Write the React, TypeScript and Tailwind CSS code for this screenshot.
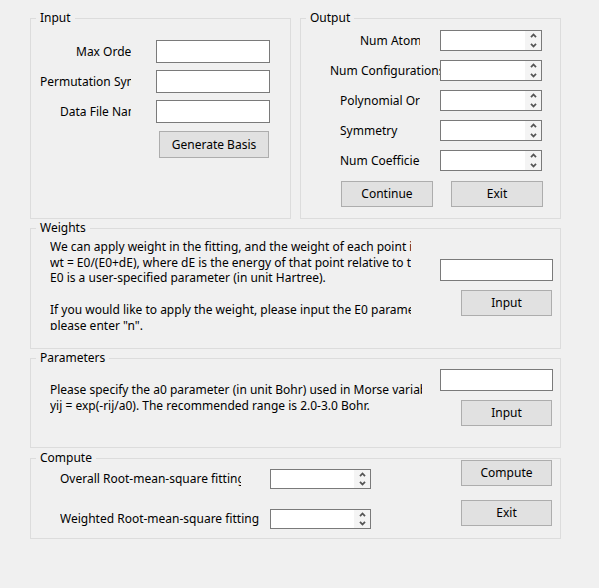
import React from "react";

function Legend({ children }: { children: React.ReactNode }) {
  return (
    <span className="absolute left-[5px] top-[-9px] bg-[#f0f0f0] px-[4px] leading-[16px] whitespace-nowrap">
      {children}
    </span>
  );
}

function Entry({ w, h }: { w: string; h: string }) {
  return <div className={`${w} ${h} border border-[#7a7a7a] bg-white`} />;
}

function Spin({ big }: { big?: boolean }) {
  return (
    <div
      className={
        big
          ? "flex h-[21px] w-[102px] shrink-0 border border-[#7a7a7a] bg-white"
          : "flex h-[20px] w-[101px] shrink-0 border border-[#7a7a7a] bg-white"
      }
    >
      <div className="flex-1" />
      <div className="flex w-[16px] flex-col items-center justify-between bg-[#f4f4f4] py-[2px]">
        <svg width="7" height="5" viewBox="0 0 7 5">
          <path d="M1 4.2 L3.5 1.5 L6 4.2" stroke="#555555" strokeWidth="1.8" fill="none" />
        </svg>
        <svg width="7" height="5" viewBox="0 0 7 5">
          <path d="M1 0.8 L3.5 3.5 L6 0.8" stroke="#555555" strokeWidth="1.8" fill="none" />
        </svg>
      </div>
    </div>
  );
}

function Btn({ children, cls }: { children: React.ReactNode; cls: string }) {
  return (
    <div
      className={`${cls} flex shrink-0 items-center justify-center border border-[#adadad] bg-[#e1e1e1]`}
    >
      {children}
    </div>
  );
}

export default function App() {
  return (
    <div className="h-[588px] w-[599px] bg-[#f0f0f0] pl-[30px] pt-[18px] font-['Noto_Sans',sans-serif] text-[12px] text-black">
      {/* top row */}
      <div className="flex gap-[9px]">
        {/* Input */}
        <div className="relative h-[201px] w-[261px] border border-[#dcdcdc]">
          <Legend>Input</Legend>
          <div className="flex flex-col gap-[7px] pl-[9px] pt-[21px]">
            {[
              ["Max Order", "pl-[36px]"],
              ["Permutation Symmetry", "pl-[0px]"],
              ["Data File Name", "pl-[20px]"],
            ].map(([t, p]) => (
              <div key={t} className="flex h-[23px] items-center">
                <div className={`w-[91px] overflow-hidden whitespace-nowrap ${p}`}>{t}</div>
                <div className="ml-[25px]">
                  <Entry w="w-[114px]" h="h-[23px]" />
                </div>
              </div>
            ))}
            <div className="ml-[119px] mt-[1px]">
              <Btn cls="w-[110px] h-[27px]">Generate Basis</Btn>
            </div>
          </div>
        </div>

        {/* Output */}
        <div className="relative h-[201px] w-[261px] border border-[#dcdcdc]">
          <Legend>Output</Legend>
          <div className="flex flex-col gap-[9px] pt-[11px]">
            {[
              ["Num Atoms", "ml-[39px] w-[80px] pl-[20px]"],
              ["Num Configurations", "ml-[29px] w-[110px]"],
              ["Polynomial Order", "ml-[39px] w-[80px]"],
              ["Symmetry", "ml-[39px] w-[80px]"],
              ["Num Coefficients", "ml-[39px] w-[80px]"],
            ].map(([t, c]) => (
              <div key={t} className="flex h-[21px] items-center">
                <div className="w-[139px] shrink-0">
                  <div className={`overflow-hidden whitespace-nowrap ${c}`}>{t}</div>
                </div>
                <Spin big />
              </div>
            ))}
            <div className="ml-[40px] mt-[1px] flex gap-[18px]">
              <Btn cls="w-[92px] h-[26px]">Continue</Btn>
              <Btn cls="w-[92px] h-[26px]">Exit</Btn>
            </div>
          </div>
        </div>
      </div>

      {/* Weights */}
      <div className="relative mt-[9px] flex h-[121px] w-[531px] border border-[#dcdcdc]">
        <Legend>Weights</Legend>
        <div className="ml-[19px] mt-[10px] h-[91px] w-[361px] overflow-hidden whitespace-nowrap leading-[15.7px]">
          <div>We can apply weight in the fitting, and the weight of each point is</div>
          <div>wt = E0/(E0+dE), where dE is the energy of that point relative to the minimum, and</div>
          <div>E0 is a user-specified parameter (in unit Hartree).</div>
          <div>&nbsp;</div>
          <div>If you would like to apply the weight, please input the E0 parameter. Otherwise,</div>
          <div>please enter "n".</div>
        </div>
        <div className="ml-[29px] flex flex-col pt-[30px]">
          <Entry w="w-[113px]" h="h-[22px]" />
          <div className="ml-[21px] mt-[9px]">
            <Btn cls="w-[91px] h-[26px]">Input</Btn>
          </div>
        </div>
      </div>

      {/* Parameters */}
      <div className="relative mt-[9px] flex h-[90px] w-[531px] border border-[#dcdcdc]">
        <Legend>Parameters</Legend>
        <div className="ml-[19px] mt-[23px] h-[40px] w-[372px] overflow-hidden whitespace-nowrap leading-[16px]">
          <div>Please specify the a0 parameter (in unit Bohr) used in Morse variables</div>
          <div>yij = exp(-rij/a0). The recommended range is 2.0-3.0 Bohr.</div>
        </div>
        <div className="ml-[18px] flex flex-col pt-[10px]">
          <Entry w="w-[113px]" h="h-[22px]" />
          <div className="ml-[21px] mt-[9px]">
            <Btn cls="w-[91px] h-[26px]">Input</Btn>
          </div>
        </div>
      </div>

      {/* Compute */}
      <div className="relative mt-[10px] flex h-[81px] w-[531px] border border-[#dcdcdc]">
        <Legend>Compute</Legend>
        <div className="flex flex-col gap-[20px] pl-[29px] pt-[10px]">
          <div className="flex h-[20px] items-center">
            <div className="w-[210px] shrink-0">
              <div className="w-[181px] overflow-hidden whitespace-nowrap">
                Overall Root-mean-square fitting error
              </div>
            </div>
            <Spin />
          </div>
          <div className="flex h-[20px] items-center">
            <div className="w-[210px] shrink-0 overflow-hidden whitespace-nowrap">
              Weighted Root-mean-square fitting
            </div>
            <Spin />
          </div>
        </div>
        <div className="ml-[90px] flex flex-col gap-[14px] pt-[1px]">
          <Btn cls="w-[91px] h-[26px]">Compute</Btn>
          <Btn cls="w-[91px] h-[26px]">Exit</Btn>
        </div>
      </div>
    </div>
  );
}
